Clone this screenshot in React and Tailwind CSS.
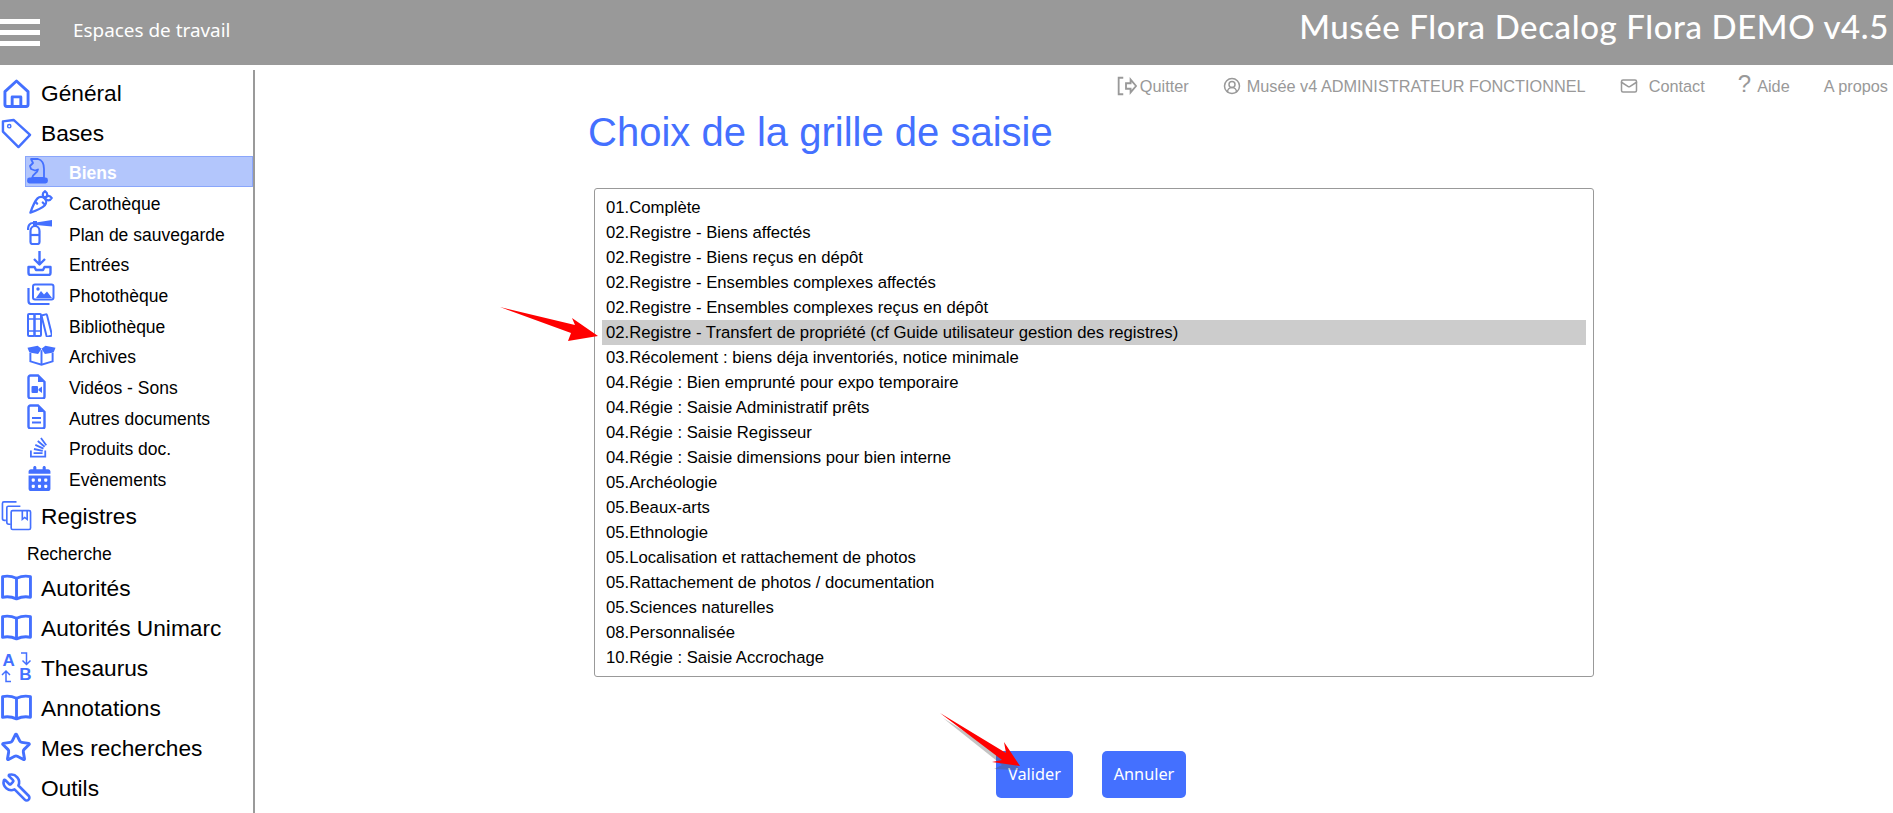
import { Star, Wrench, Mail, CircleUserRound } from 'lucide-react'
import { FaStackOverflow, FaCalendarDays } from 'react-icons/fa6'
import { TbCarrot } from 'react-icons/tb'

const BLUE = 'text-[#4470ff]'

const grilles = [
	'01.Complète',
	'02.Registre - Biens affectés',
	'02.Registre - Biens reçus en dépôt',
	'02.Registre - Ensembles complexes affectés',
	'02.Registre - Ensembles complexes reçus en dépôt',
	'02.Registre - Transfert de propriété (cf Guide utilisateur gestion des registres)',
	'03.Récolement : biens déja inventoriés, notice minimale',
	'04.Régie : Bien emprunté pour expo temporaire',
	'04.Régie : Saisie Administratif prêts',
	'04.Régie : Saisie Regisseur',
	'04.Régie : Saisie dimensions pour bien interne',
	'05.Archéologie',
	'05.Beaux-arts',
	'05.Ethnologie',
	'05.Localisation et rattachement de photos',
	'05.Rattachement de photos / documentation',
	'05.Sciences naturelles',
	'08.Personnalisée',
	'10.Régie : Saisie Accrochage',
]

const HomeIcon = () => (
	<svg viewBox="0 0 28 30" className="w-[27px] h-[29px]" fill="none" stroke="currentColor" strokeWidth="3" strokeLinejoin="round">
		<path d="M2 13L14 2l12 11v13.500a2 2 0 0 1-2 2H4a2 2 0 0 1-2-2z" />
		<path d="M9.500 28v-9.500h9V28" />
	</svg>
)

const TagIcon = () => (
	<svg viewBox="0 0 32 32" className="w-[31px] h-[31px]" fill="none" stroke="currentColor" strokeWidth="2.500" strokeLinejoin="round">
		<path d="M2 3.500L13 2l17 15.500L18 30 2 14z" />
		<circle cx="8.500" cy="8.500" r="1.700" strokeWidth="1.500" />
	</svg>
)

const BookIcon = () => (
	<svg viewBox="0 0 30 26" className="w-[31px] h-[27px]" fill="none" stroke="currentColor" strokeWidth="2.800" strokeLinejoin="round">
		<path d="M1.500 2.500c4.500-1 9-.5 13.500 1.500 4.500-2 9-2.500 13.500-1.500v20c-4.500-1-9-.5-13.500 1.500-4.500-2-9-2.500-13.500-1.500z" />
		<path d="M15 4v20" />
	</svg>
)

const KnightIcon = () => (
	<svg viewBox="0 0 21 26" className="w-[21px] h-[26px]" fill="none" stroke="currentColor" strokeWidth="1.800" strokeLinejoin="round">
		<rect x="1" y="20.500" width="19" height="4" rx="1.500" fill="currentColor" />
		<path d="M4 1h7c4 1 6 5 6 10v9H5c0-4 6-5 6-8.500l-3 1-4-1.500L3 8l3-3z" />
	</svg>
)

const ExtinguisherIcon = () => (
	<svg viewBox="0 0 25 25" className="w-[25px] h-[25px]" fill="none" stroke="currentColor" strokeWidth="2.200">
		<path d="M3.500 22V11c0-3 2-5 4.500-5s4.500 2 4.500 5v11a2 2 0 0 1-2 2h-5a2 2 0 0 1-2-2z" />
		<path d="M3.500 15h9" />
		<path d="M1 10c0-5 2-7 5-7" />
		<rect x="6" y="1" width="4" height="5" fill="currentColor" stroke="none" />
		<path d="M9 2.500L25 0v6.500L9 5z" fill="currentColor" stroke="none" />
	</svg>
)

const DownloadIcon = () => (
	<svg viewBox="0 0 25 25" className="w-[25px] h-[25px]" fill="none" stroke="currentColor" strokeWidth="2.400" strokeLinejoin="round">
		<path d="M1.500 16v6a2 2 0 0 0 2 2h18a2 2 0 0 0 2-2v-6h-6l-1.500 3h-7L7.500 16z" />
		<path d="M12.500 0v13M7 8l5.500 5.500L18 8" />
	</svg>
)

const ImagesIcon = () => (
	<svg viewBox="0 0 28 22" className="w-[28px] h-[22px]" fill="none" stroke="currentColor" strokeWidth="2">
		<rect x="6" y="1.500" width="20.500" height="15" rx="2" />
		<path d="M1.500 5v13a3 3 0 0 0 3 3h18" strokeWidth="2.200" />
		<path d="M9 15l5-7 3 3.500 3-3 5 6.500z" fill="currentColor" stroke="none" />
		<circle cx="11" cy="6" r="1.700" fill="currentColor" stroke="none" />
	</svg>
)

const BooksIcon = () => (
	<svg viewBox="0 0 25 24" className="w-[25px] h-[24px]" fill="none" stroke="currentColor" strokeWidth="2">
		<rect x="1" y="1" width="6.500" height="22" rx="1" />
		<rect x="7.500" y="1" width="6.500" height="22" rx="1" />
		<rect x="17" y="1.500" width="5.500" height="22" rx="1" transform="rotate(-14 19.750 12.500)" />
		<path d="M1 6h13M1 18h13" strokeWidth="1.500" />
	</svg>
)

const BoxIcon = () => (
	<svg viewBox="0 0 30 21" className="w-[30px] h-[21px]" fill="none" stroke="currentColor" strokeWidth="2">
		<path d="M.500 2.500L11 .5l4 3-3.500 5.500-9-1.500zM29.500 2.500L19 .5l-4 3 3.500 5.500 9-1.500z" fill="currentColor" stroke="none" />
		<path d="M3.500 8v8.500L15 20l11.500-3.500V8" />
		<path d="M15 5v15" />
	</svg>
)

const VideoFile = () => (
	<svg viewBox="0 0 19 25" className="w-[19px] h-[25px]" fill="none">
		<path d="M1.500 3.500a2 2 0 0 1 2-2H11l6.500 6.500v14.500a2 2 0 0 1-2 2h-12a2 2 0 0 1-2-2z" stroke="currentColor" strokeWidth="2.400" />
		<path d="M11 1.500V8h6.500z" fill="currentColor" />
		<rect x="4.500" y="12" width="6.500" height="7" rx="1" fill="currentColor" />
		<path d="M11.500 15l3.500-2.500v6.500l-3.500-2.500z" fill="currentColor" />
	</svg>
)

const DocFile = () => (
	<svg viewBox="0 0 19 25" className="w-[19px] h-[25px]" fill="none">
		<path d="M1.500 3.500a2 2 0 0 1 2-2H11l6.500 6.500v14.500a2 2 0 0 1-2 2h-12a2 2 0 0 1-2-2z" stroke="currentColor" strokeWidth="2.400" />
		<path d="M11 1.500V8h6.500z" fill="currentColor" />
		<path d="M5 14h9M5 18.500h9" stroke="currentColor" strokeWidth="2" />
	</svg>
)

const Registres = () => (
	<svg viewBox="0 0 32 32" className="w-[31px] h-[31px]" fill="none" stroke="currentColor" strokeWidth="1.700">
		<path d="M16 2H3a1.500 1.500 0 0 0-1.500 1.500V19a2 2 0 0 0 2 2H5" />
		<path d="M20 6.500H7.500A1.500 1.500 0 0 0 6 8v15a2 2 0 0 0 2 2h2" />
		<rect x="10.500" y="11" width="20" height="19.500" rx="1.500" />
		<path d="M22 11v9l2.500-2 2.500 2v-9" />
	</svg>
)

const Thesaurus = () => (
	<div className="w-[31px] h-[31px] relative font-black text-[17px] leading-none">
		<span className="absolute left-[2px] top-0">A</span>
		<span className="absolute right-0 bottom-0">B</span>
		<svg viewBox="0 0 31 31" className="absolute inset-0 w-[31px] h-[31px]" fill="none" stroke="currentColor" strokeWidth="1.500">
			<path d="M20 1h5.500v11M21.500 8.500l4 4 4-4" />
			<path d="M10 29.500H5V19M1 23l4-4 4 4" />
		</svg>
	</div>
)

const MainItem = ({ icon, label }) => (
	<div className="flex items-center h-10">
		<div className={`w-[32px] flex justify-center shrink-0 ${BLUE}`}>{icon}</div>
		<span className="ml-[9px] text-[22.700px] text-black">{label}</span>
	</div>
)

const SubItem = ({ icon, label, active }) => (
	<div
		className={`flex items-center h-[30.700px] ml-[25px] border ${
			active ? 'bg-[#b3c6fc] border-[#8aa6fb]' : 'border-transparent'
		}`}
	>
		<div className={`w-[30px] pl-[1px] flex shrink-0 ${BLUE}`}>{icon}</div>
		<span
			className={`ml-[13px] translate-y-[2px] text-[17.500px] ${
				active ? 'text-white font-bold' : 'text-black'
			}`}
		>
			{label}
		</span>
	</div>
)

const Sidebar = () => (
	<aside className="w-[255px] mt-[5px] shrink-0 border-r-2 border-[#9a9a9a] pt-[3px]">
		<MainItem icon={<HomeIcon />} label="Général" />
		<MainItem icon={<TagIcon />} label="Bases" />
		<div className="mt-[3px] mb-[2px]">
			<SubItem active icon={<KnightIcon />} label="Biens" />
			<SubItem icon={<TbCarrot size={27} />} label="Carothèque" />
			<SubItem icon={<ExtinguisherIcon />} label="Plan de sauvegarde" />
			<SubItem icon={<DownloadIcon />} label="Entrées" />
			<SubItem icon={<ImagesIcon />} label="Photothèque" />
			<SubItem icon={<BooksIcon />} label="Bibliothèque" />
			<SubItem icon={<BoxIcon />} label="Archives" />
			<SubItem icon={<VideoFile />} label="Vidéos - Sons" />
			<SubItem icon={<DocFile />} label="Autres documents" />
			<SubItem icon={<FaStackOverflow size={23} />} label="Produits doc." />
			<SubItem icon={<FaCalendarDays size={25} />} label="Evènements" />
		</div>
		<MainItem icon={<Registres />} label="Registres" />
		<div className="h-[32px] pt-[6px] flex items-center pl-[27px] text-[17.500px] text-black">
			Recherche
		</div>
		<MainItem icon={<BookIcon />} label="Autorités" />
		<MainItem icon={<BookIcon />} label="Autorités Unimarc" />
		<MainItem icon={<Thesaurus />} label="Thesaurus" />
		<MainItem icon={<BookIcon />} label="Annotations" />
		<MainItem icon={<Star size={33} strokeWidth={2.200} />} label="Mes recherches" />
		<MainItem icon={<Wrench size={31} strokeWidth={2} className="-scale-x-100" />} label="Outils" />
	</aside>
)

const TopLinks = () => (
	<div className="flex justify-end items-center h-[36px] mt-[3px] pr-[5px] text-[16.300px] text-[#999999]">
		<svg viewBox="0 0 24 24" className="w-[22px] h-[22px]" fill="none" stroke="currentColor" strokeWidth="2">
			<path d="M9 3H4v18h5" />
			<path d="M12 9h5V5l6 7-6 7v-4h-5z" />
		</svg>
		<span className="ml-[3px]">Quitter</span>
		<CircleUserRound size={18} className="ml-[34px]" />
		<span className="ml-[6px]">Musée v4 ADMINISTRATEUR FONCTIONNEL</span>
		<Mail size={18} className="ml-[34px]" />
		<span className="ml-[11px]">Contact</span>
		<span className="ml-[33px] text-[24px] leading-none mb-[4px]">?</span>
		<span className="ml-[6px]">Aide</span>
		<span className="ml-[34px]">A propos</span>
	</div>
)

const Arrows = () => (
	<svg viewBox="0 0 1893 813" className="absolute inset-0 w-[1893px] h-[813px] pointer-events-none">
		<path d="M500 307l75 18-3-7 26 18-30 5 3-8z" fill="#f00" />
		<path d="M943 718l64 40-3-8 16 20-26-1 8-4z" fill="#555" opacity="0.35" />
		<path d="M940 713l66 40-2-11 16 24-28-4 10-2z" fill="#f00" />
	</svg>
)

export default function App() {
	return (
		<div className="relative w-[1893px] h-[813px] overflow-hidden bg-white font-['Liberation_Sans',sans-serif]">
			<header className="h-[65px] bg-[#999999] flex items-center text-white">
				<div className="flex flex-col gap-[6px] w-[40px] shrink-0">
					<div className="h-[5px] bg-white" />
					<div className="h-[5px] bg-white" />
					<div className="h-[5px] bg-white" />
				</div>
				<span className="ml-[33px] mb-[4px] text-[18.900px] font-['Noto_Sans',sans-serif]">Espaces de travail</span>
				<span className="ml-auto mr-[4px] mb-[12px] text-[33px] font-['Lato',sans-serif] font-medium tracking-[0.6px]">
					Musée Flora Decalog Flora DEMO v4.5
				</span>
			</header>
			<div className="flex h-[748px]">
				<Sidebar />
				<main className="flex-1">
					<TopLinks />
					<div className="pl-[333px]">
						<h1 className="text-[40px] text-[#4470ff] leading-[50px] mt-[3px]">Choix de la grille de saisie</h1>
						<div className="ml-[6px] mt-[31px] w-[1000px] h-[489px] border border-[#999999] rounded-[3px] px-[7px] pt-[6px]">
							{grilles.map((g, i) => (
								<div
									key={g}
									className={`h-[25px] leading-[25px] px-[4px] text-[16.700px] text-black ${
										i === 5 ? 'bg-[#cccccc]' : ''
									}`}
								>
									{g}
								</div>
							))}
						</div>
						<div className="flex gap-[29px] mt-[74px] ml-[408px] font-['Noto_Sans',sans-serif] text-[16.300px] text-white">
							<button className="w-[77px] h-[47px] rounded-[5px] bg-[#4470ff]">Valider</button>
							<button className="w-[84px] h-[47px] rounded-[5px] bg-[#4470ff]">Annuler</button>
						</div>
					</div>
				</main>
			</div>
			<Arrows />
		</div>
	)
}
